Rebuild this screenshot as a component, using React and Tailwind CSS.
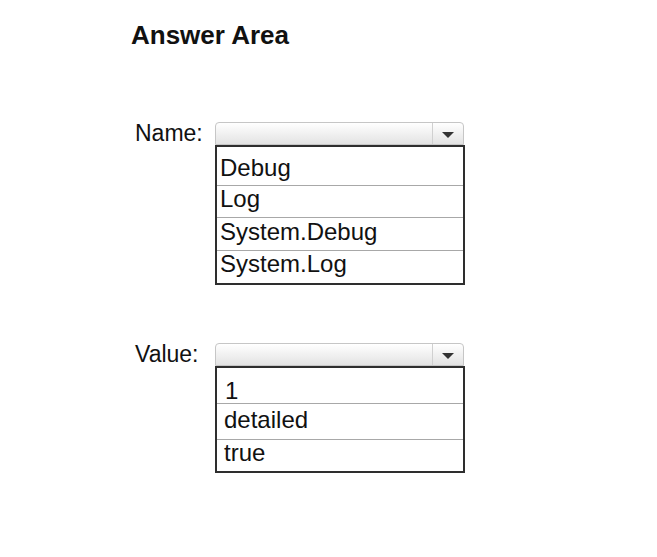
const nameRows = [
  { text: "Debug", className: "h-[31px] border-b border-[#a8a8a8] pl-[3px]" },
  { text: "Log", className: "h-[32px] border-b border-[#a8a8a8] pl-[3px]" },
  { text: "System.Debug", className: "h-[33px] border-b border-[#a8a8a8] pl-[3px] pt-[1px]" },
  { text: "System.Log", className: "h-[32px] pl-[3px]" },
];

const valueRows = [
  { text: "1", className: "h-[26px] border-b border-[#a8a8a8] pl-[8px]" },
  { text: "detailed", className: "h-[36px] border-b border-[#a8a8a8] pl-[7px] pt-[3px]" },
  { text: "true", className: "h-[31px] pl-[7px] pt-[-1px]" },
];

const SelectBox = () => (
  <div className="flex h-[23px] w-[249px] justify-end rounded-t-[4px] border border-[#c6c6c6] bg-gradient-to-b from-white to-[#e3e3e3]">
    <div className="flex w-[31px] items-center justify-center border-l border-[#d0d0d0]">
      <svg width="12" height="6" viewBox="0 0 12 6" className="mt-[2px]">
        <path d="M0 0 H12 L6 6 Z" fill="#333" />
      </svg>
    </div>
  </div>
);

const Field = ({ label, rows, listClass }) => (
  <div className="ml-[4px] flex items-start">
    <div className="w-[80px] text-[23px] leading-[23px]">{label}</div>
    <div className="flex w-[250px] flex-col">
      <SelectBox />
      <div className={listClass}>
        {rows.map((row, index) => (
          <div key={`row-${index}`} className={row.className}>
            <span className="block text-[24px] leading-[25px]">{row.text}</span>
          </div>
        ))}
      </div>
    </div>
  </div>
);

const App = () => {
  return (
    <div className="min-h-[557px] bg-white pl-[131px] pt-[20px] font-['Liberation_Sans',Arial,sans-serif] text-[#111]">
      <h2 className="text-[26px] font-bold leading-[30px]">Answer Area</h2>

      <div className="mt-[72px]">
        <Field
          label="Name:"
          rows={nameRows}
          listClass="w-[250px] border-2 border-[#2e2e2e] pt-[8px]"
        />
      </div>

      <div className="mt-[58px]">
        <Field
          label="Value:"
          rows={valueRows}
          listClass="w-[250px] border-2 border-[#2e2e2e] pt-[10px]"
        />
      </div>
    </div>
  );
};

export default App;
